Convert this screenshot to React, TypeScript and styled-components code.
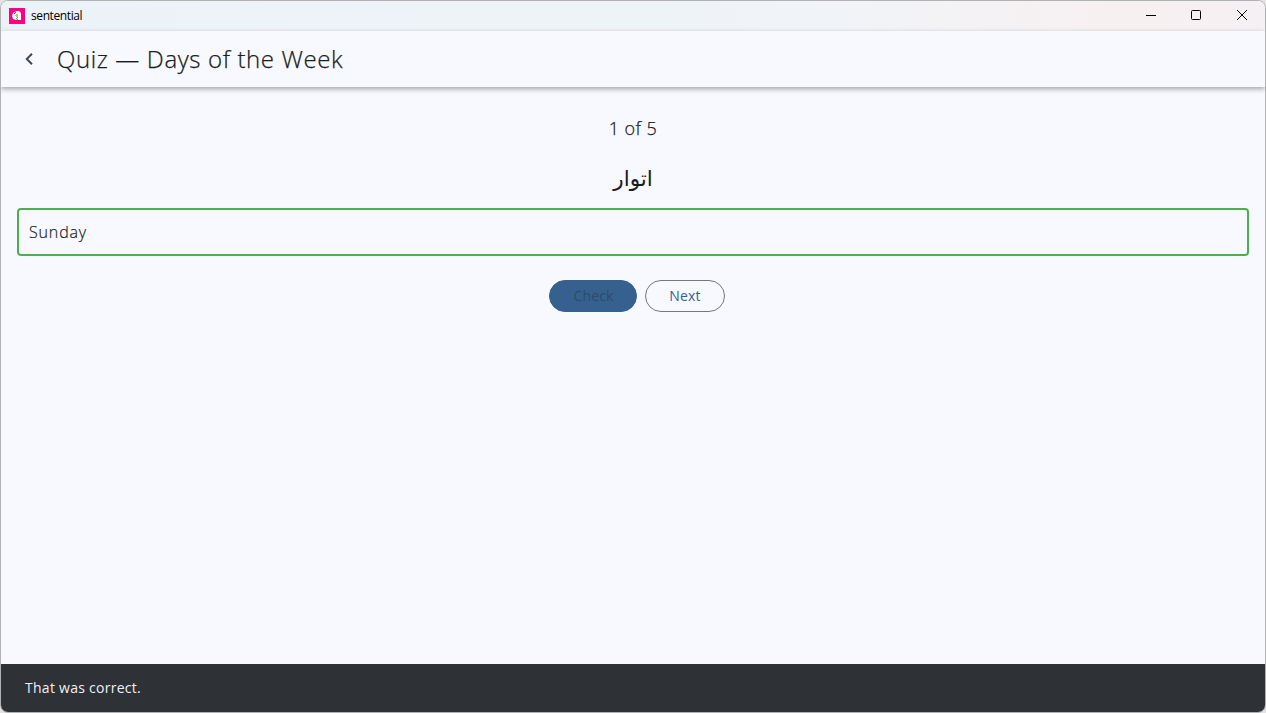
import { useState } from 'react'
import styled, { createGlobalStyle, css } from 'styled-components'

interface AnswerProps {
  isCorrect?: boolean
}

interface ButtonProps {
  filled?: boolean
}

const GlobalStyle = createGlobalStyle`
  * {
    box-sizing: border-box;
  }

  body {
    margin: 0;
    background: #e4e2e3;
    font-family: 'Open Sans', sans-serif;
    color: #191c20;
  }
`

const Window = styled.div`
  display: flex;
  flex-direction: column;
  height: 100vh;
  border: 1px solid #b2b2b5;
  border-radius: 8px;
  overflow: hidden;
  background: #f8f9ff;
`

const TitleBar = styled.header`
  display: flex;
  align-items: center;
  flex: 0 0 30px;
  padding-left: 8px;
  background: linear-gradient(90deg, #ecf3f8 0%, #eef3f7 50%, #f1f3f7 68%, #f7f0f1 88%, #f5f0f3 100%);
`

const AppName = styled.span`
  flex: 1;
  margin-left: 6px;
  font-size: 12px;
  line-height: 16px;
  letter-spacing: -0.4px;
  color: #000;
`

const WindowButton = styled.span`
  display: flex;
  align-items: center;
  justify-content: center;
  width: 46px;
  height: 30px;
  padding-bottom: 2px;
`

const AppBar = styled.div`
  display: flex;
  align-items: center;
  flex: 0 0 56px;
  padding-left: 16px;
  background: #f8f9ff;
  box-shadow: 0 2px 5px rgba(0, 0, 0, 0.35);
`

const BackButton = styled.button`
  display: flex;
  align-items: center;
  justify-content: center;
  width: 24px;
  height: 24px;
  padding: 0;
  border: none;
  background: none;
`

const Title = styled.h1`
  margin: 0 0 0 16px;
  font-size: 24px;
  font-weight: 300;
  line-height: 32px;
  letter-spacing: 0.62px;
  -webkit-text-stroke: 0.25px #191c20;
`

const Main = styled.main`
  display: flex;
  flex: 1;
  flex-direction: column;
  align-items: center;
  padding: 27px 16px 0;
`

const Progress = styled.div`
  font-size: 18px;
  font-weight: 300;
  line-height: 28px;
  letter-spacing: 0.45px;
  -webkit-text-stroke: 0.25px #191c20;
`

const Word = styled.div`
  margin-top: 22px;
  height: 44px;
  font-family: 'DejaVu Sans', sans-serif;
  font-size: 21.5px;
  line-height: 30px;
`

const Answer = styled.input<AnswerProps>(
  ({ isCorrect }) => css`
    width: 100%;
    height: 48px;
    padding: 0 10px;
    border: 2px solid ${isCorrect ? '#4caf50' : '#73777f'};
    border-radius: 4px;
    outline: none;
    background: transparent;
    font-family: 'Open Sans', sans-serif;
    font-size: 16px;
    font-weight: 300;
    letter-spacing: 0.85px;
    -webkit-text-stroke: 0.2px #191c20;
    color: #191c20;
  `,
)

const Actions = styled.div`
  display: flex;
  gap: 8px;
  margin: 24px 0 0 8px;
`

const Button = styled.button<ButtonProps>(
  ({ filled }) => css`
    width: ${filled ? 88 : 80}px;
    height: 32px;
    padding: 0 0 2px;
    border: 1px solid ${filled ? '#36618e' : '#73777f'};
    border-radius: 16px;
    background: ${filled ? '#36618e' : 'transparent'};
    font-family: 'Open Sans', sans-serif;
    font-size: 14px;
    letter-spacing: 0.15px;
    color: #36618e;

    &:disabled {
      padding-left: 1px;
      color: #2d4b6b;
    }
  `,
)

const SnackBar = styled.div`
  display: flex;
  align-items: center;
  flex: 0 0 48px;
  padding: 0 24px 2px;
  background: #2e3135;
  font-size: 14px;
  letter-spacing: 0.27px;
  color: #eff0f7;
`

const AppLogo = () => (
  <svg width="16" height="16" viewBox="0 0 16 16">
    <path fill="#ff0080" d="M0 0h16v16H0z" />
    <path fill="#fff" d="M6 4l1-1h3l2 2v7H9V11L7 12 4 11 3 8l1-3z" />
    <path fill="#ff0080" d="M6 4h1v1H6v1H5V5h1z" />
    <path fill="#b5d334" d="M7 6h2v3H7z" />
    <path fill="#f0b840" d="M6 7h1v1H6z" />
    <path fill="#20a9a0" d="M8 9h1v1H8v1H7v-1h1z" />
  </svg>
)

const App = () => {
  const [answer, setAnswer] = useState('Sunday')

  return (
    <>
      <GlobalStyle />
      <Window>
        <TitleBar>
          <AppLogo />
          <AppName>sentential</AppName>
          <WindowButton>
            <svg width="12" height="10" viewBox="0 0 12 10">
              <path fill="#000" d="M2 5h10v1H2z" />
            </svg>
          </WindowButton>
          <WindowButton>
            <svg width="10" height="10" viewBox="0 0 10 10" fill="none" stroke="#000">
              <rect x="0.5" y="0.5" width="9" height="9" rx="1" />
            </svg>
          </WindowButton>
          <WindowButton>
            <svg width="10" height="10" viewBox="0 0 10 10" fill="none" stroke="#000">
              <path d="M0 0l10 10M10 0L0 10" />
            </svg>
          </WindowButton>
        </TitleBar>
        <AppBar>
          <BackButton aria-label="Back">
            <svg width="24" height="24" viewBox="0 0 24 24" fill="none" stroke="#43474e" strokeWidth="2">
              <path d="M15 6.8L9.8 12l5.2 5.2" />
            </svg>
          </BackButton>
          <Title>Quiz — Days of the Week</Title>
        </AppBar>
        <Main>
          <Progress>1 of 5</Progress>
          <Word dir="rtl" lang="ur">اتوار</Word>
          <Answer isCorrect value={answer} onChange={(e) => setAnswer(e.target.value)} />
          <Actions>
            <Button filled disabled>Check</Button>
            <Button>Next</Button>
          </Actions>
        </Main>
        <SnackBar>That was correct.</SnackBar>
      </Window>
    </>
  )
}

export default App
